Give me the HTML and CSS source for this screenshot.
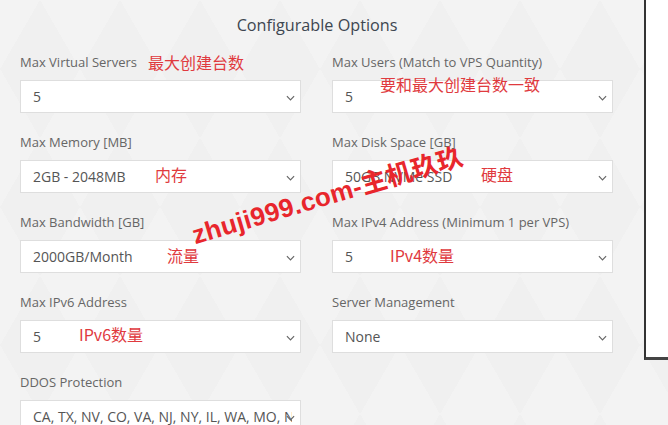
FILE: index.html
```html
<!DOCTYPE html>
<html lang="en">
<head>
<meta charset="utf-8">
<title>Configurable Options</title>
<link rel="stylesheet" href="styles.css">
</head>
<body>
<div class="page">
  <main class="main">
    <h2 class="title">Configurable Options</h2>
    <div class="grid">
      <div class="field">
        <div class="label">Max Virtual Servers</div>
        <div class="select"><span class="val">5</span><svg class="chev" viewBox="0 0 10 6"><path d="M1 1 L5 5 L9 1"/></svg></div>
        <span class="note n1">最大创建台数</span>
      </div>
      <div class="field">
        <div class="label">Max Users (Match to VPS Quantity)</div>
        <div class="select"><span class="val">5</span><svg class="chev" viewBox="0 0 10 6"><path d="M1 1 L5 5 L9 1"/></svg></div>
        <span class="note n2">要和最大创建台数一致</span>
      </div>
      <div class="field">
        <div class="label">Max Memory [MB]</div>
        <div class="select"><span class="val">2GB - 2048MB</span><svg class="chev" viewBox="0 0 10 6"><path d="M1 1 L5 5 L9 1"/></svg></div>
        <span class="note n3">内存</span>
      </div>
      <div class="field">
        <div class="label">Max Disk Space [GB]</div>
        <div class="select"><span class="val">50GB NVMe SSD</span><svg class="chev" viewBox="0 0 10 6"><path d="M1 1 L5 5 L9 1"/></svg></div>
        <span class="note n4">硬盘</span>
      </div>
      <div class="field">
        <div class="label">Max Bandwidth [GB]</div>
        <div class="select"><span class="val">2000GB/Month</span><svg class="chev" viewBox="0 0 10 6"><path d="M1 1 L5 5 L9 1"/></svg></div>
        <span class="note n5">流量</span>
      </div>
      <div class="field">
        <div class="label">Max IPv4 Address (Minimum 1 per VPS)</div>
        <div class="select"><span class="val">5</span><svg class="chev" viewBox="0 0 10 6"><path d="M1 1 L5 5 L9 1"/></svg></div>
        <span class="note n6">IPv4数量</span>
      </div>
      <div class="field">
        <div class="label">Max IPv6 Address</div>
        <div class="select"><span class="val">5</span><svg class="chev" viewBox="0 0 10 6"><path d="M1 1 L5 5 L9 1"/></svg></div>
        <span class="note n7">IPv6数量</span>
      </div>
      <div class="field">
        <div class="label">Server Management</div>
        <div class="select"><span class="val">None</span><svg class="chev" viewBox="0 0 10 6"><path d="M1 1 L5 5 L9 1"/></svg></div>
      </div>
      <div class="field">
        <div class="label">DDOS Protection</div>
        <div class="select"><span class="val">CA, TX, NV, CO, VA, NJ, NY, IL, WA, MO, NE, GA</span><svg class="chev" viewBox="0 0 10 6"><path d="M1 1 L5 5 L9 1"/></svg></div>
      </div>
    </div>
    <div class="watermark">zhuji999.com-主机玖玖</div>
  </main>
  <aside class="panel"></aside>
</div>
</body>
</html>
```

FILE: styles.css
```css
html, body {
  margin: 0;
  padding: 0;
  height: 100%;
  overflow: hidden;
}
body {
  background-color: #f0f0f0;
  background-image:
    linear-gradient(60deg, rgba(255,255,255,0.18) 25%, transparent 25%, transparent 75%, rgba(255,255,255,0.18) 75%),
    linear-gradient(-60deg, rgba(255,255,255,0.18) 25%, transparent 25%, transparent 75%, rgba(255,255,255,0.18) 75%);
  background-size: 80px 138px;
  font-family: "Open Sans", "Noto Sans CJK SC", sans-serif;
  color: #555;
}
.page {
  display: flex;
  align-items: flex-start;
  height: 100%;
}
.main {
  position: relative;
  width: 644px;
  flex: none;
}
.title {
  margin: 13px 0 0;
  font-size: 16.2px;
  line-height: 24px;
  font-weight: 400;
  color: #3d4650;
  text-align: center;
  padding-right: 10px;
}
.grid {
  display: grid;
  grid-template-columns: 281px 281px;
  column-gap: 31px;
  row-gap: 20px;
  padding: 16px 0 0 20px;
}
.field {
  position: relative;
}
.label {
  font-size: 13px;
  line-height: 18px;
  color: #666;
  margin-bottom: 9px;
  white-space: nowrap;
}
.select {
  position: relative;
  height: 33px;
  box-sizing: border-box;
  background: #fff;
  border: 1px solid #dedede;
  display: flex;
  align-items: center;
  padding: 0 8px 0 12px;
  font-size: 14px;
  color: #555;
}
.val {
  flex: 1;
  min-width: 0;
  white-space: nowrap;
  overflow: hidden;
  text-overflow: clip;
}
.chev {
  position: absolute;
  right: 5px;
  top: 14px;
  width: 9px;
  height: 6px;
  fill: none;
  stroke: #666;
  stroke-width: 1.3;
  background: transparent;
}
.note {
  position: absolute;
  color: #e03a3e;
  font-family: "Noto Sans CJK SC", sans-serif;
  font-size: 16px;
  line-height: 20px;
  white-space: nowrap;
}
.n1 { left: 128px; top: -1px; }
.n2 { left: 48px; top: 21px; }
.n3 { left: 135px; top: 31px; }
.n4 { left: 149px; top: 31px; }
.n5 { left: 147px; top: 32px; }
.n6 { left: 58px; top: 32px; }
.n7 { left: 59px; top: 31px; }
.watermark {
  position: absolute;
  left: 197px;
  top: 220px;
  font-family: "Liberation Sans", "Noto Sans CJK SC", sans-serif;
  font-weight: 700;
  font-size: 26px;
  line-height: 30px;
  color: #e8262c;
  white-space: nowrap;
  transform: rotate(-16.5deg);
  transform-origin: left bottom;
  letter-spacing: 0.3px;
}
.panel {
  flex: 1;
  height: 357px;
  background: #fff;
  border-left: 2px solid #333;
  border-bottom: 3px solid #444;
}
```
